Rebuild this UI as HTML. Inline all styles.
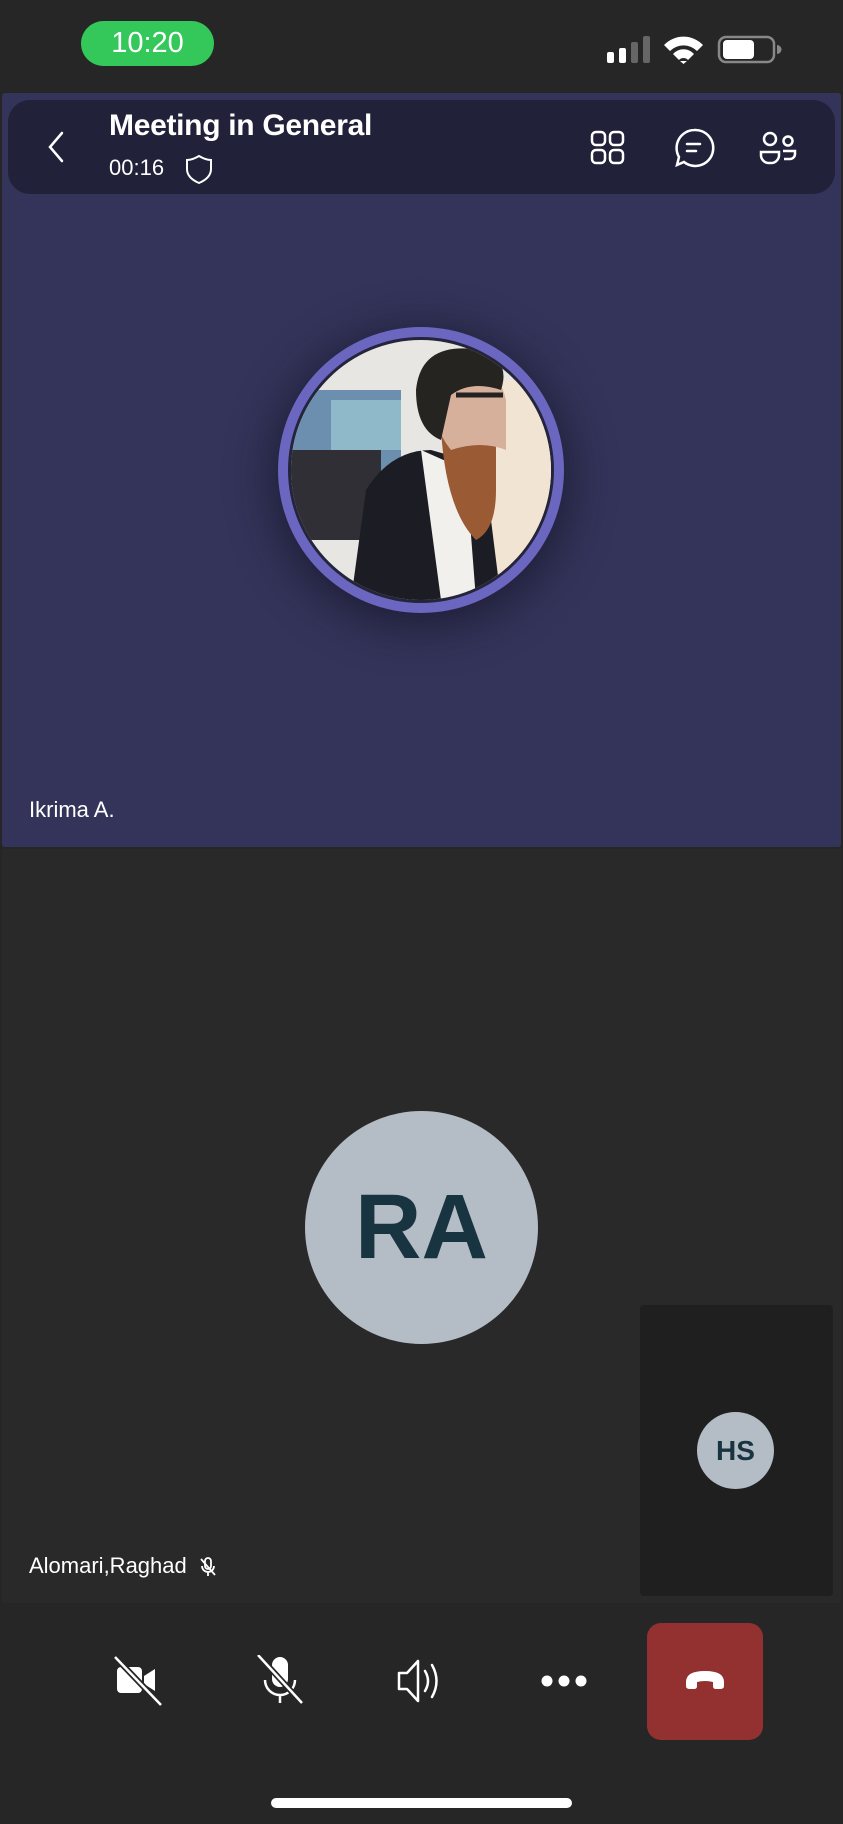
<!DOCTYPE html>
<html><head><meta charset="utf-8"><style>
*{margin:0;padding:0;box-sizing:border-box}
body{width:843px;height:1824px;background:#262626;font-family:"Liberation Sans",sans-serif;position:relative;overflow:hidden;color:#fff}
.abs{position:absolute}
</style></head><body>
<div class="abs" style="left:81px;top:21px;width:133px;height:45px;border-radius:23px;background:#34c759;color:#fff;font-size:29px;text-align:center;line-height:45px">10:20</div>
<svg class="abs" style="left:600px;top:28px" width="200" height="40" viewBox="0 0 200 40">
 <rect x="7" y="24" width="7" height="11" rx="2" fill="#fff"/>
 <rect x="19" y="20" width="7" height="15" rx="2" fill="#fff"/>
 <rect x="31" y="14" width="7" height="21" rx="2" fill="#666"/>
 <rect x="43" y="8" width="7" height="27" rx="2" fill="#666"/>
 <path d="M64 17 A27 27 0 0 1 103 17 L97 23 A19 19 0 0 0 70 23Z" fill="#fff"/>
 <path d="M73 26 A14 14 0 0 1 94 26 L88 32 A6 6 0 0 0 79 32Z" fill="#fff"/>
 <path d="M80 33 L83.5 36 L87 33 Z" fill="#fff"/>
 <rect x="119" y="9" width="55" height="25" rx="7" fill="none" stroke="#888" stroke-width="2.5"/>
 <rect x="123" y="12" width="31" height="19" rx="4" fill="#fff"/>
 <path d="M177 17 v9 a4 4 0 0 0 0 -9z" fill="#888"/>
</svg>
<div class="abs" style="left:2px;top:93px;width:839px;height:754px;background:#34345a;border-radius:3px"></div>
<div class="abs" style="left:8px;top:100px;width:827px;height:94px;background:#21213a;border-radius:22px"></div>
<svg class="abs" style="left:40px;top:130px" width="30" height="34"><path d="M22 3 L10 17 L22 31" fill="none" stroke="#fff" stroke-width="2.5" stroke-linecap="round"/></svg>
<div class="abs" style="left:109px;top:109px;font-size:30px;font-weight:bold;letter-spacing:-0.3px">Meeting in General</div>
<div class="abs" style="left:109px;top:155px;font-size:22px">00:16</div>
<svg class="abs" style="left:184px;top:153px" width="30" height="32"><path d="M15 3 C10 6 7 7 3 7 V16 C3 23 8 27 15 30 C22 27 27 23 27 16 V7 C23 7 20 6 15 3Z" fill="none" stroke="#fff" stroke-width="2"/></svg>
<svg class="abs" style="left:588px;top:128px" width="40" height="40"><g fill="none" stroke="#fff" stroke-width="2.5"><rect x="4" y="4" width="13" height="13" rx="4"/><rect x="22" y="4" width="13" height="13" rx="4"/><rect x="4" y="22" width="13" height="13" rx="4"/><rect x="22" y="22" width="13" height="13" rx="4"/></g></svg>
<svg class="abs" style="left:672px;top:126px" width="44" height="44"><g fill="none" stroke="#fff" stroke-width="2.5"><path d="M22 4 A18 18 0 1 1 12 36 L5 39 L7 31 A18 18 0 0 1 22 4Z"/><path d="M15 18 H28 M15 25 H24" stroke-linecap="round"/></g></svg>
<svg class="abs" style="left:758px;top:128px" width="44" height="40"><g fill="none" stroke="#fff" stroke-width="2.5"><circle cx="12" cy="11" r="6"/><circle cx="30" cy="13" r="4.5"/><path d="M3 24 H21 V28 A8 8 0 0 1 13 35 H11 A8 8 0 0 1 3 28Z"/><path d="M25 23 H37 V26 A5 5 0 0 1 32 31 H26"/></g></svg>
<div class="abs" style="left:278px;top:327px;width:286px;height:286px;border-radius:50%;background:#6b67c0;box-shadow:0 8px 40px 10px rgba(20,20,40,.6)"></div>
<div class="abs" style="left:288px;top:337px;width:266px;height:266px;border-radius:50%;background:#24243a"></div>
<svg class="abs" style="left:291px;top:340px" width="260" height="260" viewBox="0 0 260 260">
 <defs><clipPath id="c"><circle cx="130" cy="130" r="130"/></clipPath></defs>
 <g clip-path="url(#c)">
  <rect width="260" height="260" fill="#e8e6e2"/>
  <rect x="0" y="50" width="110" height="120" fill="#6c8fb0"/>
  <rect x="40" y="60" width="70" height="50" fill="#8fb8c8"/>
  <rect x="0" y="110" width="90" height="90" fill="#2f2f35"/>
  <rect x="200" y="40" width="60" height="200" fill="#f2e4d2"/>
  <path d="M60 260 L75 150 Q100 110 140 110 L175 120 L200 180 L210 260Z" fill="#1c1c24"/>
  <path d="M130 110 L150 260 L185 260 L175 130Z" fill="#f1f0ec"/>
  <path d="M150 90 Q155 170 185 200 Q205 190 205 150 L205 100Z" fill="#9a5a34"/>
  <path d="M140 20 Q200 0 215 60 L215 110 Q190 100 160 110 Q135 80 140 20Z" fill="#d6b09a"/>
  <path d="M125 50 Q130 0 190 10 Q220 20 210 50 Q180 40 160 55 L150 100 Q125 90 125 50Z" fill="#262420"/>
  <path d="M165 55 H212" stroke="#222" stroke-width="5"/>
 </g>
</svg>
<div class="abs" style="left:29px;top:797px;font-size:22px">Ikrima A.</div>
<div class="abs" style="left:2px;top:849px;width:839px;height:754px;background:#292929"></div>
<div class="abs" style="left:305px;top:1111px;width:233px;height:233px;border-radius:50%;background:#b4bcc6;color:#173440;font-size:92px;font-weight:bold;text-align:center;line-height:233px">RA</div>
<div class="abs" style="left:640px;top:1305px;width:193px;height:291px;background:#1f1f1f;border-radius:4px"></div>
<div class="abs" style="left:697px;top:1412px;width:77px;height:77px;border-radius:50%;background:#b4bcc6;color:#173440;font-size:28px;font-weight:bold;text-align:center;line-height:77px">HS</div>
<div class="abs" style="left:29px;top:1553px;font-size:22px">Alomari,Raghad</div>
<svg class="abs" style="left:198px;top:1556px" width="20" height="22"><g fill="none" stroke="#fff" stroke-width="1.8"><rect x="7" y="2" width="6" height="11" rx="3"/><path d="M4 10 A6 6 0 0 0 16 10 M10 16 V20"/><path d="M3 3 L17 19"/></g></svg>
<svg class="abs" style="left:112px;top:1655px" width="52" height="52" viewBox="0 0 52 52"><path d="M5 16 a4 4 0 0 1 4 -4 H26 a4 4 0 0 1 4 4 V34 a4 4 0 0 1 -4 4 H9 a4 4 0 0 1 -4 -4Z M32 21 L43 14 V36 L32 29Z" fill="#fff"/><path d="M3 2 L49 50" stroke="#262626" stroke-width="6"/><path d="M3 2 L49 50" stroke="#fff" stroke-width="2.5"/></svg>
<svg class="abs" style="left:254px;top:1655px" width="52" height="52" viewBox="0 0 52 52"><rect x="18" y="2" width="16" height="30" rx="8" fill="#fff"/><path d="M11 25 A15 15 0 0 0 41 25 M26 40 V48" fill="none" stroke="#fff" stroke-width="2.5"/><path d="M4 0 L48 48" stroke="#262626" stroke-width="6"/><path d="M4 0 L48 48" stroke="#fff" stroke-width="2.5"/></svg>
<svg class="abs" style="left:395px;top:1657px" width="52" height="48" viewBox="0 0 52 48"><path d="M4 16 H12 L23 4 V44 L12 32 H4Z" fill="none" stroke="#fff" stroke-width="2.5" stroke-linejoin="round"/><path d="M30 14 Q36 24 30 34 M37 8 Q46 24 37 40" fill="none" stroke="#fff" stroke-width="2.5" stroke-linecap="round"/></svg>
<div class="abs" style="left:541px;top:1674px"><svg width="46" height="14"><circle cx="6" cy="7" r="5.5" fill="#fff"/><circle cx="23" cy="7" r="5.5" fill="#fff"/><circle cx="40" cy="7" r="5.5" fill="#fff"/></svg></div>
<div class="abs" style="left:647px;top:1623px;width:116px;height:117px;border-radius:14px;background:#933131"></div>
<svg class="abs" style="left:683px;top:1668px" width="44" height="24" viewBox="0 0 44 24"><path d="M3 14 Q3 3 22 3 Q41 3 41 14 L41 18 Q41 21 37 21 L33 21 Q30 21 30 18 V14 Q22 12 14 14 V18 Q14 21 11 21 L7 21 Q3 21 3 18Z" fill="#fff"/></svg>
<div class="abs" style="left:271px;top:1798px;width:301px;height:10px;border-radius:5px;background:#fff"></div>
</body></html>
